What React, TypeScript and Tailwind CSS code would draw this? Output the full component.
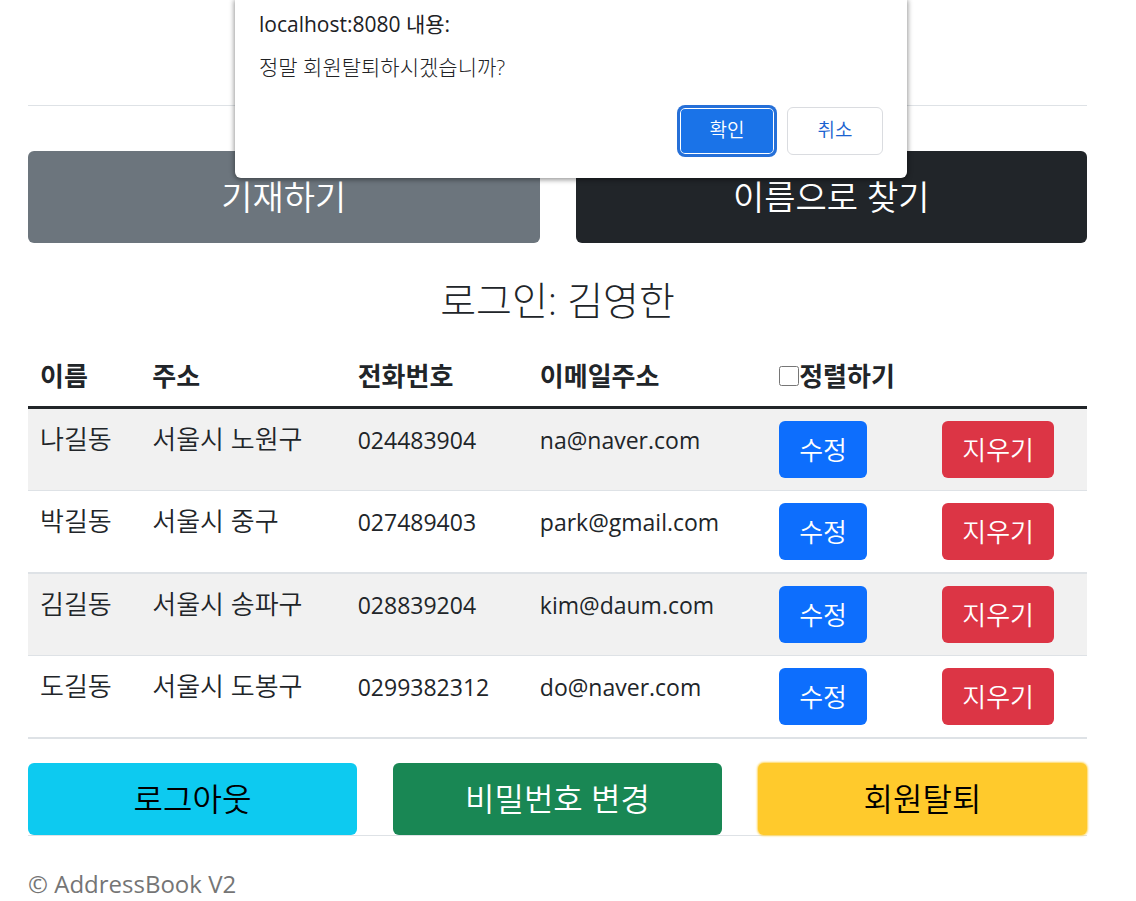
import React, { useState } from 'react';

type Contact = { name: string; address: string; phone: string; email: string };

const contacts: Contact[] = [
  { name: '나길동', address: '서울시 노원구', phone: '024483904', email: 'na@naver.com' },
  { name: '박길동', address: '서울시 중구', phone: '027489403', email: 'park@gmail.com' },
  { name: '김길동', address: '서울시 송파구', phone: '028839204', email: 'kim@daum.com' },
  { name: '도길동', address: '서울시 도봉구', phone: '0299382312', email: 'do@naver.com' },
];

function ConfirmDialog({ onClose }: { onClose: () => void }) {
  return (
    <div
      role="dialog"
      aria-labelledby="confirm-title"
      aria-describedby="confirm-message"
      className="absolute top-0 left-[235px] w-[672px] rounded-b-md bg-white px-6 pt-2 pb-[23px] shadow-[0_1px_5px_1px_rgba(0,0,0,0.4)]"
    >
      <h2 id="confirm-title" className="text-[21px] leading-8 font-normal text-[#202124]">
        localhost:8080 내용:
      </h2>
      <p id="confirm-message" className="mt-[11px] text-[21px] leading-8 font-light text-[#202124]">
        정말 회원탈퇴하시겠습니까?
      </p>
      <div className="mt-6 flex justify-end gap-3">
        <button
          type="button"
          onClick={onClose}
          className="h-12 w-24 rounded-md border border-[#2670d8] bg-[#1a73e8] pb-0.5 text-[19px] text-white ring-2 ring-[#2670d8] inset-ring-1 inset-ring-white"
        >
          확인
        </button>
        <button
          type="button"
          onClick={onClose}
          className="h-12 w-24 rounded-md border border-[#dadce0] bg-white pb-0.5 text-[19px] text-[#1a62d0]"
        >
          취소
        </button>
      </div>
    </div>
  );
}

export default function App() {
  const [open, setOpen] = useState(true);
  return (
    <div className="relative bg-white pr-[49px] pl-7 font-['Open_Sans','Noto_Sans_CJK_KR',sans-serif] font-[350] text-[#212529]">
      <header className="h-[106px] border-b border-[#dee2e6]" />
      <main>
        <nav className="mt-[45px] grid grid-cols-2 gap-9">
          <button type="button" className="h-[92px] rounded-md bg-[#6c757d] text-[34px] text-white">
            기재하기
          </button>
          <button type="button" className="h-[92px] rounded-md bg-[#212529] text-[34px] text-white">
            이름으로 찾기
          </button>
        </nav>
        <h1 className="mt-[33px] text-center text-[39px] leading-[48px] font-light">로그인: 김영한</h1>
        <table className="mt-[22px] w-full table-fixed border-collapse text-left">
          <colgroup>
            <col className="w-[10.6%]" />
            <col className="w-[19.4%]" />
            <col className="w-[17.2%]" />
            <col className="w-[22.6%]" />
            <col className="w-[15.4%]" />
            <col />
          </colgroup>
          <thead>
            <tr className="border-b-3 border-[#212529] text-[26px] leading-9">
              <th className="p-3">이름</th>
              <th className="p-3">주소</th>
              <th className="p-3">전화번호</th>
              <th className="p-3">이메일주소</th>
              <th className="p-3" colSpan={2}>
                <label className="flex items-center">
                  <input type="checkbox" className="size-5" />
                  정렬하기
                </label>
              </th>
            </tr>
          </thead>
          <tbody>
            {contacts.map((c) => (
              <tr
                key={c.name}
                className="border-b border-[#dee2e6] align-top text-[26px] leading-9 odd:bg-[#f1f1f1] even:border-b-2"
              >
                <td className="p-3">{c.name}</td>
                <td className="p-3">{c.address}</td>
                <td className="p-3 text-[23px] leading-[38px] font-normal">{c.phone}</td>
                <td className="p-3 text-[23px] leading-[38px] font-normal">{c.email}</td>
                <td className="p-3">
                  <button type="button" className="block h-[57px] rounded-md bg-[#0d6efd] px-5 text-white">
                    수정
                  </button>
                </td>
                <td className="p-3">
                  <button type="button" className="block h-[57px] rounded-md bg-[#dc3545] px-5 text-white">
                    지우기
                  </button>
                </td>
              </tr>
            ))}
          </tbody>
        </table>
        <div className="mt-6 grid grid-cols-3 gap-9 text-[32px]">
          <button type="button" className="h-[72px] rounded-md bg-[#0dcaf0] text-black">
            로그아웃
          </button>
          <button type="button" className="h-[72px] rounded-md bg-[#198754] text-white">
            비밀번호 변경
          </button>
          <button
            type="button"
            onClick={() => setOpen(true)}
            className="h-[72px] rounded-md bg-[#ffca2c] text-black shadow-[0_0_2px_1px_#ffd75e]"
          >
            회원탈퇴
          </button>
        </div>
      </main>
      <footer className="border-t border-[#dee2e6] pt-[30px] text-[24px] leading-9 font-normal text-[#757575]">
        © AddressBook V2
      </footer>
      {open && <ConfirmDialog onClose={() => setOpen(false)} />}
    </div>
  );
}
